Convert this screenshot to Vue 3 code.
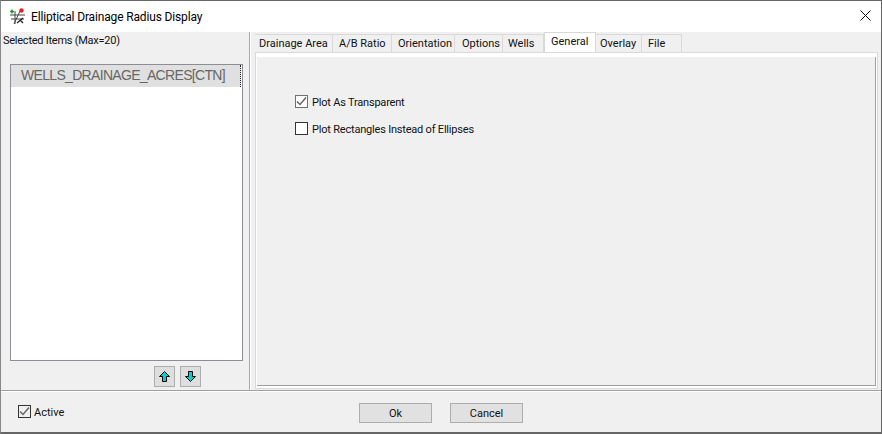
<template>
  <div class="window">
    <header class="titlebar">
      <svg class="app-icon" width="18" height="18" viewBox="0 0 18 18">
        <path d="M1 8h15M2 12h13M6 4v13M11 4l-6 13" stroke="#444" stroke-width="1" fill="none" />
        <path d="M8 16l6-5M11 13l3 3" stroke="#222" stroke-width="1.200" fill="none" />
        <circle cx="12.500" cy="3.500" r="2.200" fill="#e8202c" />
        <path d="M1 4.500h4M3 2.500v4" stroke="#1c9a30" stroke-width="1.600" />
      </svg>
      <span class="title">Elliptical Drainage Radius Display</span>
      <svg class="close" width="11" height="11" viewBox="0 0 11 11">
        <path d="M0.500 0.500l10 10M10.500 0.500l-10 10" stroke="#111" stroke-width="1" fill="none" />
      </svg>
    </header>

    <div class="body">
      <aside class="left">
        <div class="left-label">Selected Items (Max=20)</div>
        <div class="listbox">
          <div class="list-row">WELLS_DRAINAGE_ACRES[CTN]</div>
        </div>
        <div class="move-btns">
          <button class="move-btn">
            <svg width="11" height="11" viewBox="0 0 11 11">
              <path d="M5.500 0.500L10.500 5.500H7.500V10.500H3.500V5.500H0.500z" fill="#00d0d0" stroke="#000" stroke-width="1" />
            </svg>
          </button>
          <button class="move-btn">
            <svg width="11" height="11" viewBox="0 0 11 11">
              <path d="M5.500 10.500L10.500 5.500H7.500V0.500H3.500V5.500H0.500z" fill="#00d0d0" stroke="#000" stroke-width="1" />
            </svg>
          </button>
        </div>
      </aside>

      <section class="right">
        <div class="tabs">
          <div
            v-for="tab in tabs"
            :key="tab.label"
            class="tab"
            :class="{ active: tab.label === activeTab }"
            :style="{ width: tab.width + 'px', paddingLeft: tab.pad + 'px' }"
          >
            {{ tab.label }}
          </div>
        </div>
        <div class="page">
          <div class="page-inner">
            <label class="check first">
              <span class="box">
                <svg width="11" height="11" viewBox="0 0 11 11">
                  <path d="M1 5.500l3 3 6-7" stroke="#666" stroke-width="1.500" fill="none" />
                </svg>
              </span>
              <span class="check-text">Plot As Transparent</span>
            </label>
            <label class="check">
              <span class="box"></span>
              <span class="check-text">Plot Rectangles Instead of Ellipses</span>
            </label>
          </div>
        </div>
      </section>
    </div>

    <footer class="footer">
      <label class="check active-check">
        <span class="box">
          <svg width="11" height="11" viewBox="0 0 11 11">
            <path d="M1 5.500l3 3 6-7" stroke="#666" stroke-width="1.500" fill="none" />
          </svg>
        </span>
        <span class="check-text">Active</span>
      </label>
      <div class="actions">
        <button class="action">Ok</button>
        <button class="action">Cancel</button>
      </div>
    </footer>
  </div>
</template>

<script setup>
const activeTab = 'General'
const tabs = [
  { label: 'Drainage Area', width: 78, pad: 4 },
  { label: 'A/B Ratio', width: 59, pad: 6 },
  { label: 'Orientation', width: 63, pad: 6 },
  { label: 'Options', width: 48, pad: 7 },
  { label: 'Wells', width: 41, pad: 5 },
  { label: 'General', width: 52, pad: 6 },
  { label: 'Overlay', width: 46, pad: 4 },
  { label: 'File', width: 40, pad: 6 }
]
</script>

<style>
html,
body {
  margin: 0;
  background: #f0f0f0;
}
</style>

<style scoped>
.window {
  width: 882px;
  height: 434px;
  box-sizing: border-box;
  display: flex;
  flex-direction: column;
  background: #f0f0f0;
  border-top: 1px solid #666;
  border-left: 1px solid #888;
  border-right: 1px solid #666;
  border-bottom: 2px solid #666;
  font-family: Roboto, "Liberation Sans", sans-serif;
  font-size: 11px;
  color: #111;
  overflow: hidden;
}
.titlebar {
  height: 31px;
  flex: none;
  display: flex;
  align-items: center;
  background: #fff;
  padding: 0 10px 2px 8px;
  box-sizing: border-box;
}
.app-icon {
  margin-right: 4px;
}
.title {
  flex: 1;
  padding-top: 2px;
  font-size: 12px;
  letter-spacing: -0.15px;
  color: #000;
}
.body {
  flex: 1;
  display: flex;
  min-height: 0;
}
.left {
  width: 249px;
  flex: none;
  box-sizing: border-box;
  display: flex;
  flex-direction: column;
  border-right: 1px solid #a9a9a9;
}
.left-label {
  height: 32px;
  padding: 2px 0 0 2px;
  box-sizing: border-box;
  letter-spacing: -0.25px;
}
.listbox {
  width: 233px;
  height: 297px;
  margin-left: 9px;
  box-sizing: border-box;
  border: 1px solid #8d8d9a;
  background: #fff;
}
.list-row {
  width: 230px;
  height: 22px;
  box-sizing: border-box;
  line-height: 20px;
  padding-left: 10px;
  background: #e0e0e0;
  border-right: 1px dotted #222;
  color: #666;
  font-family: "Liberation Sans", sans-serif;
  font-size: 14px;
  letter-spacing: -0.68px;
}
.move-btns {
  display: flex;
  gap: 5px;
  margin: 5px 0 0 153px;
}
.move-btn {
  width: 21px;
  height: 21px;
  padding: 0;
  display: flex;
  align-items: center;
  justify-content: center;
  background: #dedede;
  border: 1px solid #adadad;
}
.right {
  flex: 1;
  display: flex;
  flex-direction: column;
  border-left: 1px solid #fff;
  padding-left: 4px;
}
.tabs {
  height: 20px;
  display: flex;
  align-items: flex-end;
}
.tab {
  height: 18px;
  box-sizing: border-box;
  border: 1px solid #d9d9d9;
  border-left: 0;
  border-bottom: 0;
  line-height: 18px;
}
.tab.active {
  height: 20px;
  line-height: 17px;
  background: #fff;
  border-left: 1px solid #d9d9d9;
}
.page {
  width: 623px;
  height: 338px;
  box-sizing: border-box;
  background: #fff;
  border: 1px solid #d9d9d9;
  padding: 4px 1px 2px 1px;
  margin-bottom: 1px;
}
.page-inner {
  height: 100%;
  box-sizing: border-box;
  background: #f0f0f0;
  border-right: 1px solid #a0a0a0;
  border-bottom: 1px solid #a0a0a0;
  padding: 38px 0 0 38px;
}
.check {
  display: flex;
  align-items: center;
  gap: 4px;
  height: 13px;
}
.check + .check {
  margin-top: 14px;
}
.check-text {
  padding-top: 2px;
  letter-spacing: -0.2px;
}
.active-check {
  gap: 3px;
}
.active-check .check-text {
  letter-spacing: 0;
}
.box {
  width: 13px;
  height: 13px;
  box-sizing: border-box;
  border: 1px solid #333;
  background: #fff;
  display: flex;
  align-items: center;
  justify-content: center;
}
.first .box {
  border-color: #707070;
}
.footer {
  height: 41px;
  flex: none;
  position: relative;
  display: flex;
  align-items: center;
  border-top: 1px solid #a0a0a0;
  box-shadow: inset 0 1px 0 #fff;
  padding-left: 17px;
}
.active-check .box {
  background: #f0f0f0;
}
.actions {
  position: absolute;
  left: 358px;
  top: 12px;
  display: flex;
  gap: 18px;
}
.action {
  width: 73px;
  height: 20px;
  padding: 0;
  font: inherit;
  color: #111;
  background: #e1e1e1;
  border: 1px solid #adadad;
}
</style>
